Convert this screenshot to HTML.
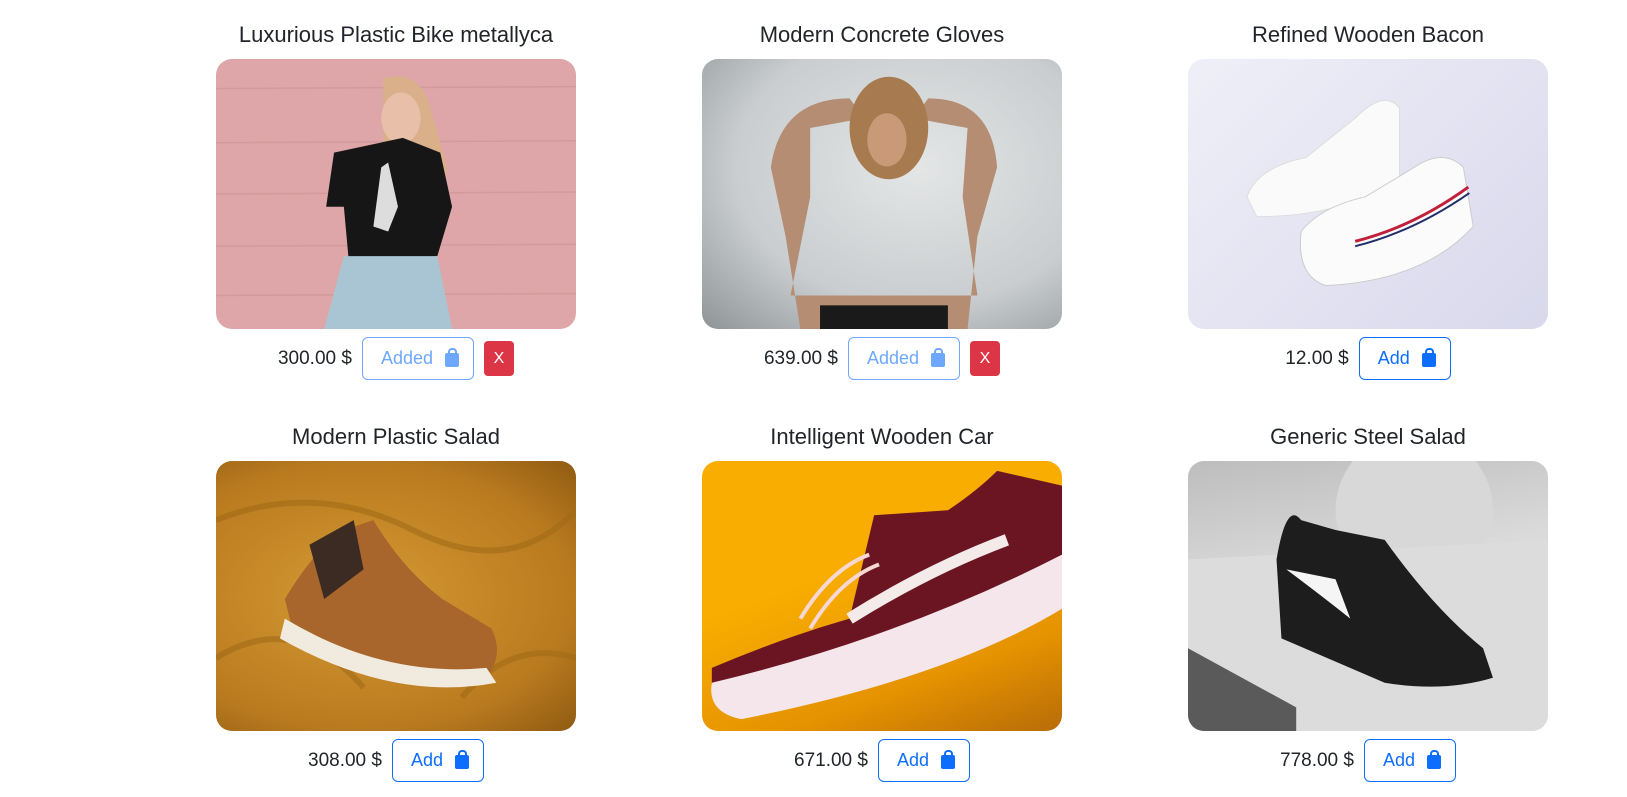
<!DOCTYPE html>
<html><head><meta charset="utf-8"><style>
*{box-sizing:border-box;margin:0;padding:0}
body{width:1627px;height:797px;background:#fff;font-family:"Liberation Sans",sans-serif;color:#212529;position:relative;overflow:hidden}
.card{position:absolute;width:360px}
.t{position:absolute;left:-60px;right:-60px;text-align:center;font-size:22px;line-height:26px;top:0}
.img{position:absolute;left:0;top:37px;width:360px;height:270px;border-radius:16px;overflow:hidden}
.img svg{width:360px;height:270px}
.row{position:absolute;left:-60px;right:-60px;top:315px;height:43px;display:flex;justify-content:center;align-items:center;gap:10px}
.p{font-size:19px}
.b{height:43px;border:1px solid #0d6efd;color:#0d6efd;border-radius:6px;font-size:18px;display:flex;align-items:center;padding:0 14px 0 18px;gap:12px;background:#fff}
.b.ad{border-color:#6ea8fe;color:#6ea8fe}
.bag{width:14px;height:14px;background:currentColor;border-radius:2px;position:relative;margin-top:3px}
.bag:before{content:"";position:absolute;left:3px;top:-5px;width:5px;height:6px;border:2px solid currentColor;border-bottom:none;border-radius:4px 4px 0 0}
.x{width:30px;height:35px;background:#dc3545;color:#fff;border-radius:4px;font-size:16px;display:flex;align-items:center;justify-content:center}
</style></head><body>

<div class="card" style="left:216px;top:22px">
<div class="t">Luxurious Plastic Bike metallyca</div>
<div class="img" style="background:#dea6a8">
<svg viewBox="0 0 366 274" preserveAspectRatio="none"><g stroke="#cf9597" stroke-width="1.5" opacity=".7"><line x1="0" y1="30" x2="366" y2="28"/><line x1="0" y1="85" x2="366" y2="83"/><line x1="0" y1="137" x2="366" y2="135"/><line x1="0" y1="190" x2="366" y2="188"/><line x1="0" y1="240" x2="366" y2="238"/></g>
<path d="M170 20 Q200 10 215 40 L235 110 L225 200 L180 200 L170 120 Z" fill="#d9b08a"/>
<ellipse cx="188" cy="60" rx="20" ry="26" fill="#e8bfa8"/>
<path d="M120 95 L190 80 L228 95 L240 150 L225 200 L135 205 L130 150 L112 150 Z" fill="#161616"/>
<path d="M168 110 L175 105 L185 150 L175 175 L160 170 Z" fill="#ddd"/>
<path d="M130 200 L225 200 L240 274 L110 274 Z" fill="#a9c5d3"/>
</svg></div>
<div class="row"><span class="p">300.00 $</span><span class="b ad">Added<span class="bag"></span></span><span class="x">X</span></div>
</div>

<div class="card" style="left:702px;top:22px">
<div class="t">Modern Concrete Gloves</div>
<div class="img" style="background:radial-gradient(ellipse at 60% 40%,#e4e6e6,#c9cdcf 60%,#8f9496)">
<svg viewBox="0 0 366 274" preserveAspectRatio="none"><path d="M70 110 Q80 40 150 40 L165 60 L110 70 L110 140 L90 240 L280 240 L265 140 L270 70 L215 60 L230 40 Q295 40 300 110 L280 180 L270 274 L100 274 L85 180 Z" fill="#b48d73"/>
<ellipse cx="190" cy="70" rx="40" ry="52" fill="#a77b4f"/><ellipse cx="188" cy="82" rx="20" ry="27" fill="#c99978"/>
<rect x="120" y="250" width="130" height="24" fill="#1a1a1a"/></svg></div>
<div class="row"><span class="p">639.00 $</span><span class="b ad">Added<span class="bag"></span></span><span class="x">X</span></div>
</div>

<div class="card" style="left:1188px;top:22px">
<div class="t">Refined Wooden Bacon</div>
<div class="img" style="background:linear-gradient(135deg,#efeff8,#d9d8ec)">
<svg viewBox="0 0 366 274" preserveAspectRatio="none"><path d="M60 140 Q70 110 120 100 L170 60 Q200 30 215 50 L215 120 Q160 160 70 160 Z" fill="#fafafa" stroke="#ddd"/>
<path d="M115 175 Q135 150 180 140 L230 110 Q260 90 280 110 L290 170 Q240 225 140 230 Q110 220 115 175 Z" fill="#fbfbfb" stroke="#ccc"/>
<path d="M170 185 Q230 170 285 130" stroke="#c0203a" stroke-width="3" fill="none"/><path d="M170 190 Q230 175 286 136" stroke="#1f2f6a" stroke-width="2" fill="none"/></svg></div>
<div class="row"><span class="p">12.00 $</span><span class="b">Add<span class="bag"></span></span></div>
</div>

<div class="card" style="left:216px;top:424px">
<div class="t">Modern Plastic Salad</div>
<div class="img" style="background:radial-gradient(ellipse at 40% 50%,#d69a35,#b87a1e 70%,#8f5a12)">
<svg viewBox="0 0 366 274" preserveAspectRatio="none"><g stroke="#a26a17" stroke-width="6" fill="none" opacity=".6"><path d="M0 60 Q100 20 200 70 T366 50"/><path d="M0 200 Q80 150 150 230"/><path d="M250 240 Q300 180 366 200"/></g>
<path d="M70 140 Q100 90 130 70 L160 60 Q190 110 230 140 L280 170 Q295 200 270 225 Q200 240 80 180 Z" fill="#a8652c"/>
<path d="M70 160 Q170 220 275 210 L285 225 Q180 245 65 180 Z" fill="#f1ebdf"/>
<path d="M95 85 L140 60 L150 110 L110 140 Z" fill="#3b2b23"/></svg></div>
<div class="row"><span class="p">308.00 $</span><span class="b">Add<span class="bag"></span></span></div>
</div>

<div class="card" style="left:702px;top:424px">
<div class="t">Intelligent Wooden Car</div>
<div class="img" style="background:linear-gradient(160deg,#f8ad00 40%,#e59300 75%,#b86c07)">
<svg viewBox="0 0 366 274" preserveAspectRatio="none"><path d="M10 210 Q80 180 150 160 L175 55 L250 50 Q280 30 300 10 L366 25 L366 110 Q230 190 10 232 Z" fill="#6c1522"/>
<path d="M10 225 Q200 180 366 95 L366 150 Q250 220 40 262 Q5 255 10 225 Z" fill="#f4e6ea"/>
<path d="M150 160 Q230 110 310 80" stroke="#f5eaea" stroke-width="12" fill="none"/>
<path d="M100 160 Q130 110 170 95 M110 170 Q140 120 180 105" stroke="#f6d7d4" stroke-width="4" fill="none"/></svg></div>
<div class="row"><span class="p">671.00 $</span><span class="b">Add<span class="bag"></span></span></div>
</div>

<div class="card" style="left:1188px;top:424px">
<div class="t">Generic Steel Salad</div>
<div class="img" style="background:linear-gradient(170deg,#bdbdbd,#dadada 40%,#e3e3e3)">
<svg viewBox="0 0 366 274" preserveAspectRatio="none"><circle cx="230" cy="50" r="80" fill="#d8d8d8"/>
<path d="M0 100 L366 80 L366 274 L0 274 Z" fill="#dcdcdc"/><path d="M0 190 L110 250 L110 274 L0 274 Z" fill="#5a5a5a"/>
<path d="M90 100 Q100 40 115 60 L150 70 L200 80 Q250 150 300 190 L310 220 Q260 235 200 225 L95 180 Z" fill="#1d1d1d"/>
<path d="M100 110 Q140 140 165 160 L150 120 Z" fill="#f5f5f5"/></svg></div>
<div class="row"><span class="p">778.00 $</span><span class="b">Add<span class="bag"></span></span></div>
</div>

</body></html>
